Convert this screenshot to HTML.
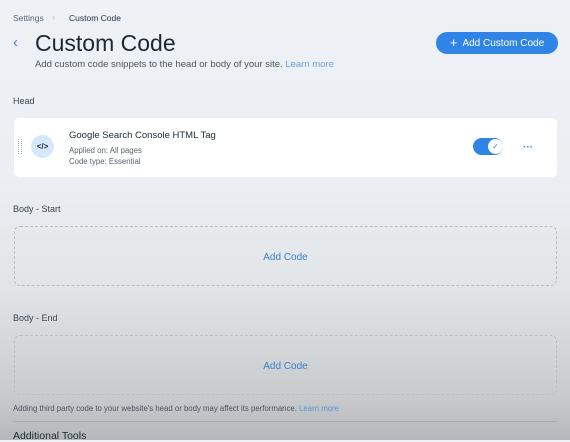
<!DOCTYPE html>
<html><head><style>
*{margin:0;padding:0;box-sizing:border-box}
body{width:570px;height:440px;overflow:hidden;font-family:"Liberation Sans",sans-serif;background:linear-gradient(180deg,#eef1f5 0%,#ebeef2 40%,#e2e5e8 65%,#c8cbce 90%,#b5b8bb 100%);position:relative;color:#20303c}
.a{position:absolute;white-space:nowrap}
.box{position:absolute;left:14px;width:543px;height:60px;border:1px dashed #b9bec4;border-radius:6px;text-align:center;line-height:62px;font-size:10px;color:#3d80c8}
</style></head><body>
<div class="a" style="left:13px;top:13px;font-size:8.5px;color:#5a6470">Settings</div>
<div class="a" style="left:52px;top:12px;font-size:9px;color:#b8bec6">›</div>
<div class="a" style="left:69px;top:13px;font-size:8.5px;color:#2a3440">Custom Code</div>
<div class="a" style="left:13px;top:34px;font-size:15px;color:#3d80c8">‹</div>
<div class="a" style="left:35px;top:30px;font-size:23px;color:#1c2833">Custom Code</div>
<div class="a" style="left:35px;top:59px;font-size:9.5px;color:#4a5560">Add custom code snippets to the head or body of your site. <span style="color:#6aa2dc">Learn more</span></div>
<div class="a" style="left:436px;top:32px;width:122px;height:22px;border-radius:11px;background:#2f84e6;color:#fff;font-size:10px;line-height:22px;text-align:center"><span style="font-size:13px;vertical-align:-1px">+</span>&nbsp; Add Custom Code</div>
<div class="a" style="left:13px;top:96px;font-size:9px;color:#3a4550">Head</div>
<div class="a" style="left:14px;top:118px;width:543px;height:59px;background:#fff;border-radius:5px"></div>
<div class="a" style="left:18px;top:139px;width:4px;height:15px;border-left:1px dotted #9aa;border-right:1px dotted #9aa"></div>
<div class="a" style="left:31px;top:135px;width:23px;height:23px;border-radius:50%;background:#d6e8fb;font-size:8px;line-height:23px;text-align:center;color:#1c2833;font-weight:bold">&lt;/&gt;</div>
<div class="a" style="left:69px;top:130px;font-size:9.5px;color:#1c2833">Google Search Console HTML Tag</div>
<div class="a" style="left:69px;top:146px;font-size:7.8px;color:#5a6470">Applied on: All pages</div>
<div class="a" style="left:69px;top:157px;font-size:7.8px;color:#5a6470">Code type: Essential</div>
<div class="a" style="left:473px;top:138px;width:30px;height:17px;border-radius:9px;background:#2f84e6"></div>
<div class="a" style="left:488px;top:139px;width:15px;height:15px;border-radius:50%;background:#fff;font-size:8px;line-height:15px;text-align:center;color:#2f84e6">✓</div>
<div class="a" style="left:523px;top:142px;font-size:10px;color:#2f84e6;font-weight:bold">···</div>
<div class="a" style="left:13px;top:204px;font-size:9px;color:#3a4550">Body - Start</div>
<div class="box" style="top:226px">Add Code</div>
<div class="a" style="left:13px;top:313px;font-size:9px;color:#3a4550">Body - End</div>
<div class="box" style="top:335px">Add Code</div>
<div class="a" style="left:13px;top:404px;font-size:7.8px;color:#4a5560">Adding third party code to your website's head or body may affect its performance. <span style="color:#5d95d0">Learn more</span></div>
<div class="a" style="left:13px;top:421px;width:544px;height:1px;background:#a8acb0"></div>
<div class="a" style="left:13px;top:430px;font-size:10.5px;color:#1c2833">Additional Tools</div>
</body></html>
